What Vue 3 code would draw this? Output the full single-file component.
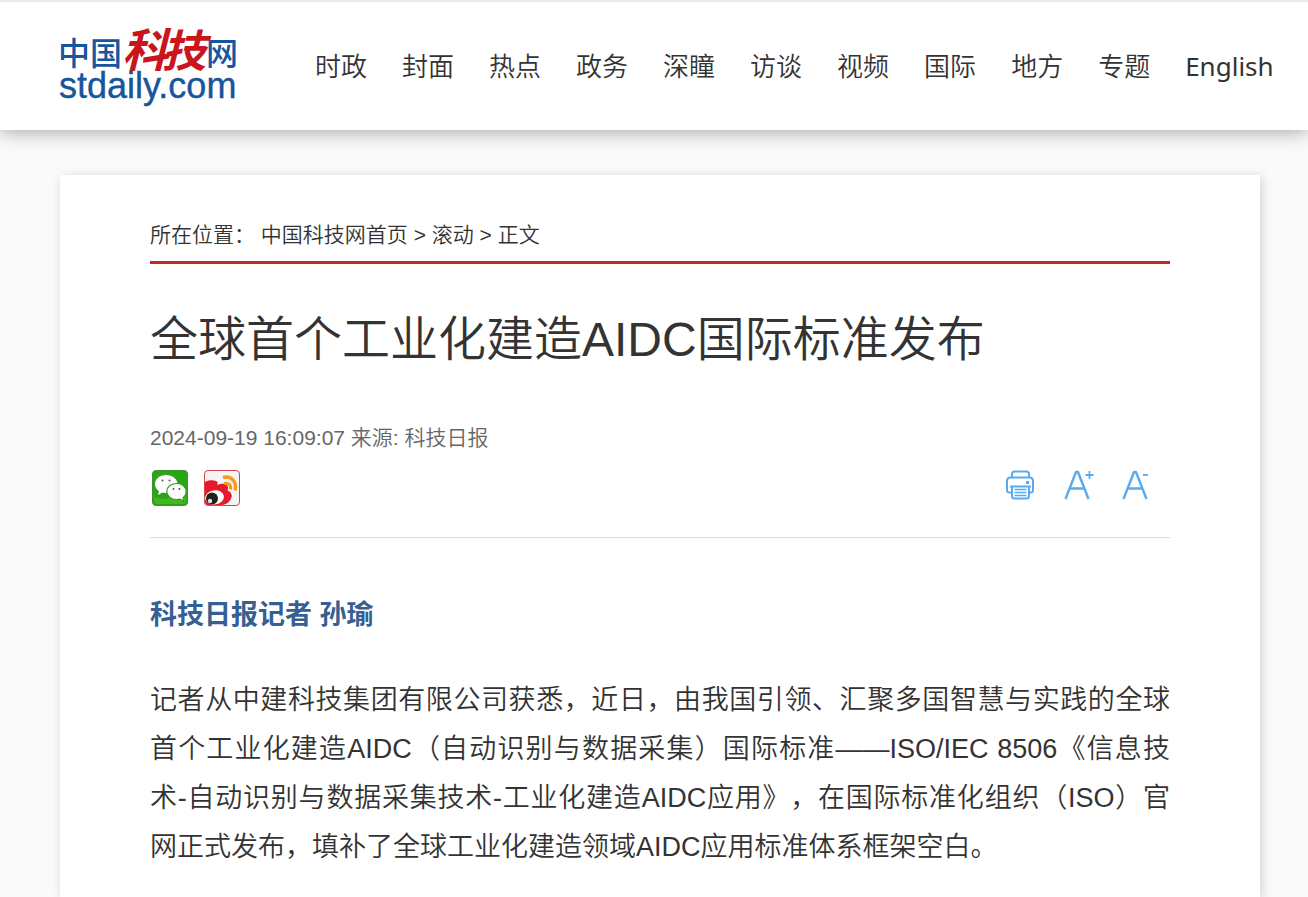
<template>
  <header class="header">
    <a href="#" class="logo" aria-label="中国科技网">
      <svg width="180" height="84" viewBox="0 0 180 84">
        <g class="logo-blue">
          <text x="-2" y="41" font-size="32">中国</text>
          <text x="146" y="41" font-size="32">网</text>
        </g>
        <g class="logo-red">
          <text x="62" y="43" font-size="46">科</text>
          <text x="102" y="43" font-size="44">技</text>
        </g>
        <text class="logo-domain" x="-1" y="74" font-size="36">stdaily.com</text>
      </svg>
    </a>
    <nav class="nav">
      <a v-for="item in navItems" :key="item" href="#">{{ item }}</a>
      <a href="#" class="nav-en">English</a>
    </nav>
  </header>

  <main class="article">
    <div class="breadcrumb">
      所在位置： <a href="#">中国科技网首页</a> &gt; <a href="#">滚动</a> &gt; 正文
    </div>

    <h1 class="title">全球首个工业化建造AIDC国际标准发布</h1>

    <div class="meta">2024-09-19 16:09:07 来源: 科技日报</div>

    <div class="toolbar">
      <div class="share">
        <button type="button" aria-label="微信">
          <svg width="36" height="36" viewBox="0 0 36 36">
            <rect x="0.5" y="0.5" width="35" height="35" rx="3.5" fill="#2aa515" stroke="#3f8f35" />
            <path d="M2 27C12 31 25 28 34 19V31q0 3-3 3H5q-3 0-3-3z" fill="#43b51e" />
            <path d="M14 5C7.5 5 3 9 3 14c0 3 1.5 5.500 4 7.200L6 25l4.500-2.500c1.200.3 2.300.5 3.500.5 6.500 0 11.500-4 11.500-9S20.500 5 14 5z" fill="#fff" />
            <path d="M24.500 13.500c-5.500 0-9.700 3.500-9.700 8s4.200 8 9.700 8c1.200 0 2.300-.2 3.300-.5l4 2.500-.8-3.700c2-1.500 3.200-3.700 3.200-6.300 0-4.500-4.200-8-9.700-8z" fill="#fff" stroke="#2fa51b" stroke-width="1.2" />
            <g fill="#555">
              <circle cx="10.5" cy="10.5" r="1" />
              <circle cx="17.5" cy="10.5" r="1" />
              <circle cx="21.5" cy="19" r="1" />
              <circle cx="27.5" cy="19" r="1" />
            </g>
          </svg>
        </button>
        <button type="button" aria-label="微博">
          <svg width="36" height="36" viewBox="0 0 36 36">
            <rect x="0.5" y="0.5" width="35" height="35" rx="3.5" fill="#f6f4f4" stroke="#d9434b" />
            <path d="M1 12c3-2 8-2 11-1 2 1 2 2 1 4 5-2 10-2 11 2 .4 1.500-.2 2.500-.5 3.500 3 1 5 4 4 7-1.500 4-4 6.500-9 7.500H4q-3 0-3-3z" fill="#e31b2c" />
            <ellipse cx="10.5" cy="27.5" rx="9.5" ry="7" fill="#fff" transform="rotate(-8 10 27.500)" />
            <circle cx="8" cy="28.5" r="6" fill="#202020" />
            <circle cx="6" cy="31" r="2.2" fill="#ddd" />
            <g fill="none" stroke="#f59a1b">
              <path d="M19 7.500c8-2 14.500 4 12 13" stroke-width="3.500" />
              <path d="M20 13.500c4.500-1 7.500 1.500 6.500 6" stroke-width="3" />
            </g>
          </svg>
        </button>
      </div>
      <div class="tools">
        <button type="button" aria-label="打印">
          <svg width="30" height="30" viewBox="0 0 30 30" fill="none" stroke="#5aaaf0" stroke-width="2">
            <path d="M6 7.500V4q0-2.500 2.500-2.500h12q2.500 0 2.500 2.500v3.500" />
            <path d="M5.500 22.500H3.500q-2.500 0-2.500-2.500v-9Q1 7.500 4.500 7.500h19q3.500 0 3.500 3.500v9q0 2.500-2.500 2.500h-1.500" />
            <path d="M4 16.500h21" />
            <path d="M6 16.500V26q0 2.500 2.500 2.500h12q2.500 0 2.500-2.500v-9.500" />
            <path d="M8.500 19.500h12M8.500 22.500h12M8.500 25.500h12" stroke-width="1.4" />
            <rect x="20.5" y="11.5" width="2" height="2" fill="#5aaaf0" stroke-width="1" />
          </svg>
        </button>
        <button type="button" aria-label="放大字号">
          <svg width="30" height="30" viewBox="0 0 30 30" fill="none" stroke="#5aaaf0" stroke-width="2.4">
            <path d="M1.500 29L12 2h2l10.500 27M5.500 18.500h15" stroke-linejoin="round" />
            <path d="M21.500 5h8M25.500 1v8" stroke-width="1.8" />
          </svg>
        </button>
        <button type="button" aria-label="缩小字号">
          <svg width="30" height="30" viewBox="0 0 30 30" fill="none" stroke="#5aaaf0" stroke-width="2.4">
            <path d="M1.500 29L12 2h2l10.500 27M5.500 18.500h15" stroke-linejoin="round" />
            <path d="M21 5h5" stroke-width="1.8" />
          </svg>
        </button>
      </div>
    </div>

    <p class="author"><strong>科技日报记者 孙瑜</strong></p>
    <p class="paragraph">记者从中建科技集团有限公司获悉，近日，由我国引领、汇聚多国智慧与实践的全球首个工业化建造AIDC（自动识别与数据采集）国际标准——ISO/IEC 8506《信息技术-自动识别与数据采集技术-工业化建造AIDC应用》，在国际标准化组织（ISO）官<span class="keep">网正式</span>发布，填补了全球工业化建造领域AIDC应用标准体系框架空白。</p>
  </main>
</template>

<script setup>
const navItems = [
  '时政',
  '封面',
  '热点',
  '政务',
  '深瞳',
  '访谈',
  '视频',
  '国际',
  '地方',
  '专题',
];
</script>

<style>
body {
  margin: 0;
  background: #fafafa;
}
</style>

<style scoped>
a {
  color: inherit;
  text-decoration: none;
}

button {
  display: block;
  padding: 0;
  border: 0;
  background: none;
  cursor: pointer;
}

svg {
  display: block;
  overflow: visible;
}

.header {
  display: flex;
  align-items: center;
  height: 128px;
  padding-left: 60px;
  border-top: 2px solid #ebebeb;
  background: #fff;
  box-shadow: 0 0 20px rgba(0, 0, 0, 0.4);
}

.logo-blue {
  fill: #17559c;
  font-family: 'Noto Sans CJK SC', sans-serif;
  font-weight: 500;
}

.logo-red {
  fill: #c9151b;
  font-family: 'Noto Sans CJK SC', sans-serif;
  font-style: italic;
  font-weight: 700;
}

.logo-domain {
  fill: #17559c;
  stroke: #17559c;
  stroke-width: 0.4px;
  font-family: 'Liberation Sans', Arial, sans-serif;
}

.nav {
  display: flex;
  gap: 35px;
  margin-left: 75px;
  color: #333;
  font-family: 'Noto Sans', 'Noto Sans CJK SC', sans-serif;
  font-size: 26px;
  font-weight: 350;
  line-height: 40px;
  white-space: nowrap;
}

.nav-en {
  font-weight: 400;
}

.article {
  max-width: 1020px;
  min-height: calc(100vh - 215px);
  margin: 45px 48px 0 60px;
  padding: 40px 90px 0;
  background: #fff;
  box-shadow: 2px 2px 10px rgba(0, 0, 0, 0.16);
  color: #333;
  font-family: 'Liberation Sans', 'Noto Sans CJK SC', sans-serif;
  font-weight: 350;
  text-spacing-trim: space-all;
}

.breadcrumb {
  padding-bottom: 6px;
  border-bottom: 3px solid #c62828;
  font-size: 21px;
  line-height: 40px;
}

.title {
  margin: 40px 0 0;
  font-size: 48px;
  font-weight: 350;
  line-height: 72px;
}

.meta {
  margin-top: 46px;
  color: #666;
  font-size: 21px;
  line-height: 32px;
}

.toolbar {
  display: flex;
  align-items: flex-start;
  justify-content: space-between;
  padding: 16px 18px 31px 2px;
  border-bottom: 1px solid #ddd;
}

.share {
  display: flex;
  gap: 16px;
}

.tools {
  display: flex;
  gap: 28px;
}

.author {
  margin: 53px 0 0;
  color: #366092;
  font-size: 27px;
  line-height: 49px;
}

.author strong {
  font-weight: 700;
}

.paragraph {
  margin: 36px 0 0;
  font-size: 27px;
  line-height: 49px;
  text-align: justify;
}

.keep {
  white-space: nowrap;
}
</style>
